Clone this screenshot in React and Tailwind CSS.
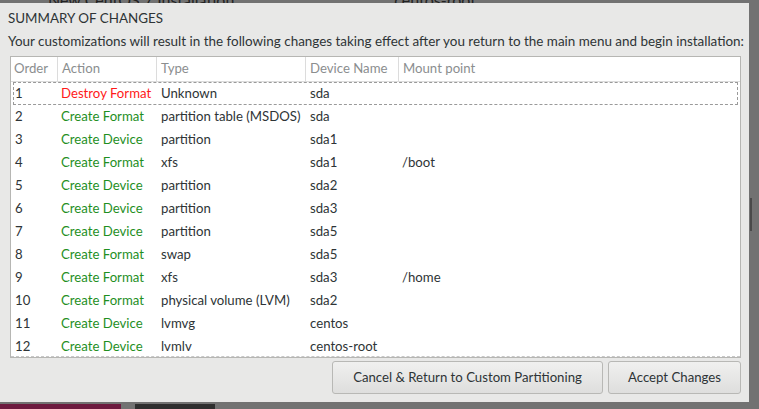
import React from "react";

const rows = [
  ["1", "Destroy Format", "Unknown", "sda", ""],
  ["2", "Create Format", "partition table (MSDOS)", "sda", ""],
  ["3", "Create Device", "partition", "sda1", ""],
  ["4", "Create Format", "xfs", "sda1", "/boot"],
  ["5", "Create Device", "partition", "sda2", ""],
  ["6", "Create Device", "partition", "sda3", ""],
  ["7", "Create Device", "partition", "sda5", ""],
  ["8", "Create Format", "swap", "sda5", ""],
  ["9", "Create Format", "xfs", "sda3", "/home"],
  ["10", "Create Format", "physical volume (LVM)", "sda2", ""],
  ["11", "Create Device", "lvmvg", "centos", ""],
  ["12", "Create Device", "lvmlv", "centos-root", ""],
];

const Row = ({ row, first }) => {
  const [order, action, type, device, mount] = row;
  return (
    <div
      className={
        "flex h-[23px] shrink-0 items-center mx-[2px] " +
        (first ? "border border-dashed border-[#9a9a9a]" : "border border-transparent")
      }
    >
      <div className="w-[47px] pl-[1px]">{order}</div>
      <div
        className={
          "w-[99px] " + (action.startsWith("Destroy") ? "text-[#ff1a1a]" : "text-[#1f8f1f]")
        }
      >
        {action}
      </div>
      <div className="w-[149px] pl-[1px]">{type}</div>
      <div className="w-[93px] pl-[1px]">{device}</div>
      <div>{mount}</div>
    </div>
  );
};

const App = () => {
  return (
    <div
      className="relative w-[759px] h-[409px] overflow-hidden bg-[#727272] text-[13.2px] text-[#2e3436]"
      style={{ fontFamily: "Lato, 'DejaVu Sans', sans-serif" }}
    >
      <div className="h-[3px] overflow-hidden">
        <div className="flex gap-[160px] pl-[48px] -mt-[12px] text-[16px] text-[#222]">
          <span>New CentOS 7 Installation</span>
          <span>centos-root</span>
        </div>
      </div>
      <div className="flex">
        <div className="w-[749px] h-[399px] bg-[#e8e8e7] flex flex-col">
          <div className="pl-[8px] pt-[7px] h-[26px] leading-[17px] text-[13.4px] text-[#2e3436]">
            SUMMARY OF CHANGES
          </div>
          <div className="pl-[8px] pt-[4px] h-[27px] leading-[17px] text-[13.45px] whitespace-nowrap">
            Your customizations will result in the following changes taking effect after you return to the main menu and begin installation:
          </div>
          <div className="ml-[10px] w-[731px] h-[302px] bg-white border border-[#b6b6b3] flex flex-col overflow-hidden">
            <div className="flex h-[25px] shrink-0 items-center border-b border-[#dcdcdc] text-[#8b8e8f]">
              <div className="w-[47px] h-full flex items-center pl-[3px] border-r border-[#dcdcdc]">Order</div>
              <div className="w-[99px] h-full flex items-center pl-[4px] border-r border-[#dcdcdc]">Action</div>
              <div className="w-[149px] h-full flex items-center pl-[4px] border-r border-[#dcdcdc]">Type</div>
              <div className="w-[93px] h-full flex items-center pl-[4px] border-r border-[#dcdcdc]">Device Name</div>
              <div className="h-full flex items-center pl-[4px]">Mount point</div>
            </div>
            <div className="flex-1 flex flex-col overflow-hidden">
              {rows.map((r, i) => (
                <Row key={r[0]} row={r} first={i === 0} />
              ))}
            </div>
            <div className="h-0 border-t border-dashed border-[#c8c8c8]" />
          </div>
          <div className="flex justify-end gap-[5px] pr-[8px] pt-[3px]">
            <button className="w-[271px] h-[33px] rounded-[3px] border border-[#b8b8b5] bg-gradient-to-b from-[#f0f0ef] to-[#dededd] text-[#2e3436]">
              Cancel &amp; Return to Custom Partitioning
            </button>
            <button className="w-[133px] h-[33px] rounded-[3px] border border-[#b8b8b5] bg-gradient-to-b from-[#f0f0ef] to-[#dededd] text-[#2e3436]">
              Accept Changes
            </button>
          </div>
        </div>
        <div className="w-[10px] relative">
          <div className="absolute left-[1px] top-[195px] w-[2px] h-[33px] bg-[#4a4a4a]" />
        </div>
      </div>
      <div className="flex mt-[2px] h-[7px]">
        <div className="w-[121px] bg-[#6d1a3f]" />
        <div className="w-[14px]" />
        <div className="w-[80px] bg-[#2e2e2e]" />
      </div>
    </div>
  );
};

export default App;
